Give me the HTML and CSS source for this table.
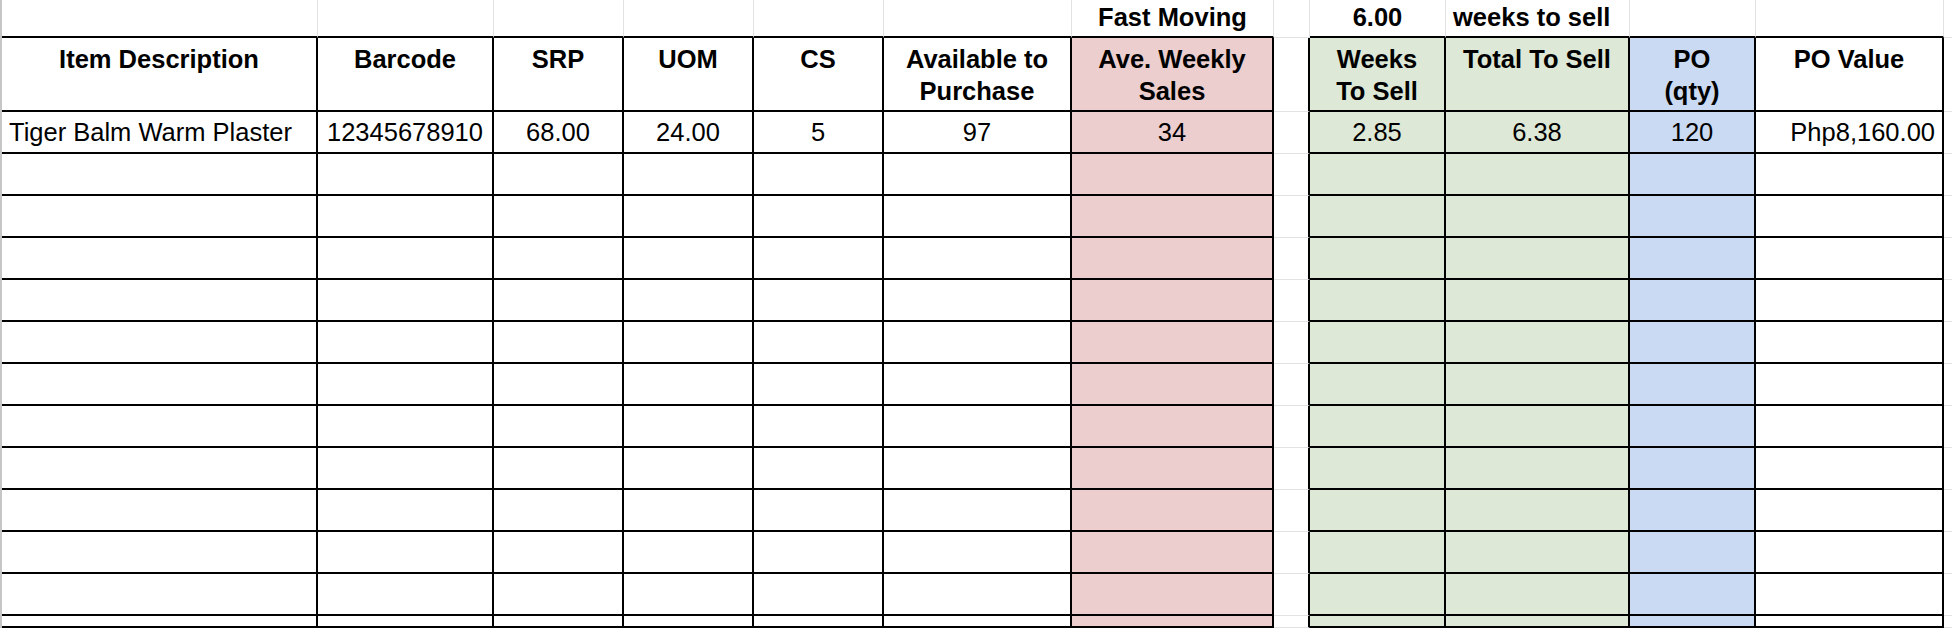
FILE: index.html
```html
<!DOCTYPE html>
<html lang="en">
<head>
<meta charset="utf-8">
<title>PO Sheet</title>
<link rel="stylesheet" href="styles.css">
</head>
<body>
<div class="sheet">
  <div class="row top">
    <div class="c edge"></div>
    <div class="c edge"></div>
    <div class="c edge"></div>
    <div class="c edge"></div>
    <div class="c edge"></div>
    <div class="c edge"></div>
    <div class="c edge center">Fast Moving</div>
    <div class="c"></div>
    <div class="c edge center">6.00</div>
    <div class="c edge">weeks to sell</div>
    <div class="c edge"></div>
    <div class="c edge"></div>
    <div class="c"></div>
  </div>
  <div class="row head">
    <div class="c b">Item Description</div>
    <div class="c b">Barcode</div>
    <div class="c b">SRP</div>
    <div class="c b">UOM</div>
    <div class="c b">CS</div>
    <div class="c b">Available to<br>Purchase</div>
    <div class="c b pink">Ave. Weekly<br>Sales</div>
    <div class="c gap"></div>
    <div class="c b green">Weeks<br>To Sell</div>
    <div class="c b green">Total To Sell</div>
    <div class="c b blue">PO<br>(qty)</div>
    <div class="c b">PO Value</div>
    <div class="c"></div>
  </div>
  <div class="row data">
    <div class="c b left">Tiger Balm Warm Plaster</div>
    <div class="c b">12345678910</div>
    <div class="c b">68.00</div>
    <div class="c b">24.00</div>
    <div class="c b">5</div>
    <div class="c b">97</div>
    <div class="c b pink">34</div>
    <div class="c gap"></div>
    <div class="c b green">2.85</div>
    <div class="c b green">6.38</div>
    <div class="c b blue">120</div>
    <div class="c b right">Php8,160.00</div>
    <div class="c"></div>
  </div>
  <div class="row data"><div class="c b"></div><div class="c b"></div><div class="c b"></div><div class="c b"></div><div class="c b"></div><div class="c b"></div><div class="c b pink"></div><div class="c gap"></div><div class="c b green"></div><div class="c b green"></div><div class="c b blue"></div><div class="c b"></div><div class="c"></div></div>
  <div class="row data"><div class="c b"></div><div class="c b"></div><div class="c b"></div><div class="c b"></div><div class="c b"></div><div class="c b"></div><div class="c b pink"></div><div class="c gap"></div><div class="c b green"></div><div class="c b green"></div><div class="c b blue"></div><div class="c b"></div><div class="c"></div></div>
  <div class="row data"><div class="c b"></div><div class="c b"></div><div class="c b"></div><div class="c b"></div><div class="c b"></div><div class="c b"></div><div class="c b pink"></div><div class="c gap"></div><div class="c b green"></div><div class="c b green"></div><div class="c b blue"></div><div class="c b"></div><div class="c"></div></div>
  <div class="row data"><div class="c b"></div><div class="c b"></div><div class="c b"></div><div class="c b"></div><div class="c b"></div><div class="c b"></div><div class="c b pink"></div><div class="c gap"></div><div class="c b green"></div><div class="c b green"></div><div class="c b blue"></div><div class="c b"></div><div class="c"></div></div>
  <div class="row data"><div class="c b"></div><div class="c b"></div><div class="c b"></div><div class="c b"></div><div class="c b"></div><div class="c b"></div><div class="c b pink"></div><div class="c gap"></div><div class="c b green"></div><div class="c b green"></div><div class="c b blue"></div><div class="c b"></div><div class="c"></div></div>
  <div class="row data"><div class="c b"></div><div class="c b"></div><div class="c b"></div><div class="c b"></div><div class="c b"></div><div class="c b"></div><div class="c b pink"></div><div class="c gap"></div><div class="c b green"></div><div class="c b green"></div><div class="c b blue"></div><div class="c b"></div><div class="c"></div></div>
  <div class="row data"><div class="c b"></div><div class="c b"></div><div class="c b"></div><div class="c b"></div><div class="c b"></div><div class="c b"></div><div class="c b pink"></div><div class="c gap"></div><div class="c b green"></div><div class="c b green"></div><div class="c b blue"></div><div class="c b"></div><div class="c"></div></div>
  <div class="row data"><div class="c b"></div><div class="c b"></div><div class="c b"></div><div class="c b"></div><div class="c b"></div><div class="c b"></div><div class="c b pink"></div><div class="c gap"></div><div class="c b green"></div><div class="c b green"></div><div class="c b blue"></div><div class="c b"></div><div class="c"></div></div>
  <div class="row data"><div class="c b"></div><div class="c b"></div><div class="c b"></div><div class="c b"></div><div class="c b"></div><div class="c b"></div><div class="c b pink"></div><div class="c gap"></div><div class="c b green"></div><div class="c b green"></div><div class="c b blue"></div><div class="c b"></div><div class="c"></div></div>
  <div class="row data"><div class="c b"></div><div class="c b"></div><div class="c b"></div><div class="c b"></div><div class="c b"></div><div class="c b"></div><div class="c b pink"></div><div class="c gap"></div><div class="c b green"></div><div class="c b green"></div><div class="c b blue"></div><div class="c b"></div><div class="c"></div></div>
  <div class="row data"><div class="c b"></div><div class="c b"></div><div class="c b"></div><div class="c b"></div><div class="c b"></div><div class="c b"></div><div class="c b pink"></div><div class="c gap"></div><div class="c b green"></div><div class="c b green"></div><div class="c b blue"></div><div class="c b"></div><div class="c"></div></div>
  <div class="row data"><div class="c b"></div><div class="c b"></div><div class="c b"></div><div class="c b"></div><div class="c b"></div><div class="c b"></div><div class="c b pink"></div><div class="c gap"></div><div class="c b green"></div><div class="c b green"></div><div class="c b blue"></div><div class="c b"></div><div class="c"></div></div>
  <div class="row foot"><div class="c"></div><div class="c"></div><div class="c"></div><div class="c"></div><div class="c"></div><div class="c"></div><div class="c"></div><div class="c"></div><div class="c"></div><div class="c"></div><div class="c"></div><div class="c"></div><div class="c"></div></div>
</div>
</body>
</html>
```
FILE: styles.css
```css
* {
  box-sizing: border-box;
}

html,
body {
  margin: 0;
  background: #ffffff;
  width: 1952px;
  height: 628px;
  overflow: hidden;
}

body {
  font-family: "Liberation Sans", Arial, Helvetica, sans-serif;
  font-size: 25.5px;
  color: #000000;
}

.sheet {
  display: grid;
  grid-template-columns: 316px 176px 130px 130px 130px 188px 202px 36px 136px 184px 126px 188px 8px;
  grid-template-rows: 38px 74px repeat(12, 42px) 12px;
  width: 1952px;
  height: 628px;
  overflow: hidden;
  border-left: 2px solid #c6c6c6;
  background: #ffffff;
}

.row {
  display: contents;
}

.c {
  border-right: 1px solid #e2e2e2;
  border-bottom: 1px solid #e2e2e2;
  padding: 0 7px;
  line-height: 31.5px;
  white-space: nowrap;
  overflow: hidden;
  background: #ffffff;
}

.top .c {
  padding-top: 2px;
  font-weight: bold;
}

.top .edge {
  border-bottom: 2px solid #000000;
}

.center {
  text-align: center;
}

.b {
  border-right: 2px solid #000000;
  border-bottom: 2px solid #000000;
}

.gap {
  border-right: 2px solid #000000;
}

.head .c {
  padding-top: 6px;
  font-weight: bold;
  text-align: center;
}

.data .c {
  padding-top: 5px;
  text-align: center;
}

.data .left {
  text-align: left;
}

.data .right {
  text-align: right;
  padding-right: 7px;
}

.foot .c {
  border-bottom: none;
}

.pink {
  background: #eccece;
}

.green {
  background: #dde8d6;
}

.blue {
  background: #cbdaf3;
}
```
